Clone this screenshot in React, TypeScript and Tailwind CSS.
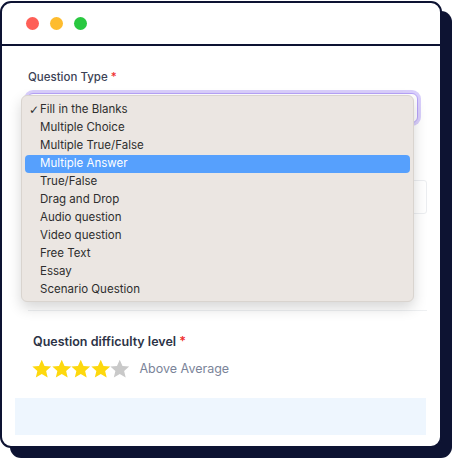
import React from "react";

const options = [
  "Fill in the Blanks",
  "Multiple Choice",
  "Multiple True/False",
  "Multiple Answer",
  "True/False",
  "Drag and Drop",
  "Audio question",
  "Video question",
  "Free Text",
  "Essay",
  "Scenario Question",
];

const Star = ({ on }: { on: boolean }) => (
  <svg width="19.5" height="20" viewBox="0 0 24 24">
    <polygon
      points="12,0.5 15.4,8.2 23.6,8.9 17.4,14.4 19.3,22.6 12,18.3 4.7,22.6 6.6,14.4 0.4,8.9 8.6,8.2"
      fill={on ? "#fdd80e" : "#c9c9c9"}
    />
  </svg>
);

const App = () => {
  const selected = 0;
  const hovered = 3;

  return (
    <div className="w-[452px] h-[458px] bg-white font-['Inter',sans-serif]">
      <div className="mt-[1px] w-[442px] h-[447px] border-2 border-[#0d1332] rounded-[11px] shadow-[10px_10px_0_0_#0d1332] bg-white overflow-hidden flex flex-col">
        <div className="h-[43px] shrink-0 border-b-2 border-[#0d1332] flex items-center gap-[11px] pl-[24px]">
          <span className="w-[13px] h-[13px] rounded-full bg-[#fe5f57]" />
          <span className="w-[13px] h-[13px] rounded-full bg-[#febc2e]" />
          <span className="w-[13px] h-[13px] rounded-full bg-[#29c840]" />
        </div>

        <div className="relative flex-1 flex flex-col">
          <div className="ml-[26px] mt-[23px] text-[11.5px] leading-4 font-medium text-[#3b4256]">
            Question Type <span className="text-[#ef2b2b]">*</span>
          </div>
          <div className="ml-[25px] mt-[8px] w-[391px] h-[30px] rounded-[6px] border border-[#b7a3f8] ring-[3px] ring-[#d9cffc] bg-white" />

          <div className="ml-[26px] mt-[57px] w-[399px] h-[34px] rounded-[3px] border border-[#eceef1]" />
          <div className="ml-[26px] mt-[96px] w-[399px] h-px bg-[#eef0f2]" />

          <div className="ml-[31px] mt-[21px] text-[12.5px] leading-5 font-semibold text-[#2c3346]">
            Question difficulty level <span className="text-[#ef2b2b]">*</span>
          </div>
          <div className="ml-[30px] mt-[7px] flex items-center">
            <div className="flex">
              {[0, 1, 2, 3, 4].map((i) => (
                <Star key={i} on={i < 4} />
              ))}
            </div>
            <span className="ml-[10px] text-[12.5px] text-[#7b8499]">Above Average</span>
          </div>

          <div className="ml-[13px] mt-[19px] w-[411px] h-[37px] bg-[#eef6fe]" />

          <div className="absolute left-[19px] top-[49px] w-[393px] h-[207px] rounded-[6px] bg-[#ebe6e2] border border-[#d9d4cf] shadow-[0_6px_14px_rgba(0,0,0,0.16)] pt-[5px] px-[3px]">
            {options.map((o, i) => (
              <div
                key={o}
                className={`h-[18px] rounded-[4px] flex items-center text-[11.5px] ${
                  i === hovered ? "bg-[#56a0fd] text-white" : "text-[#2e2e2e]"
                }`}
              >
                <span className="w-[15px] pl-[4px] text-[12px] font-['DejaVu_Sans',sans-serif] leading-none">
                  {i === selected ? "✓" : ""}
                </span>
                <span>{o}</span>
              </div>
            ))}
          </div>
        </div>
      </div>
    </div>
  );
};

export default App;
